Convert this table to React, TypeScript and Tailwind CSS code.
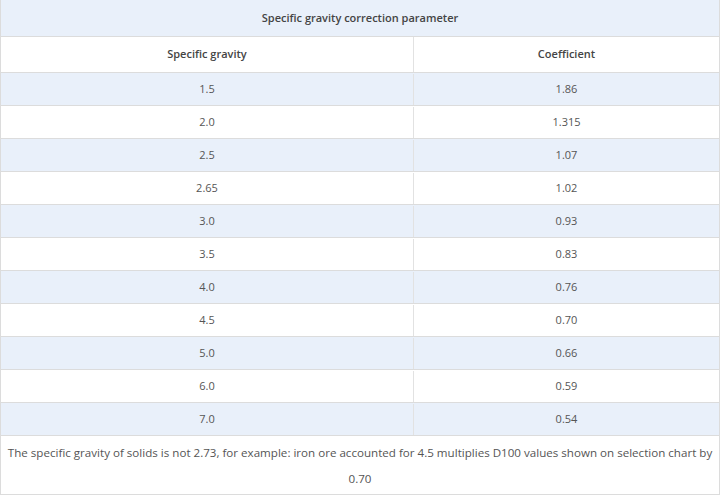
import React from "react";

const rows: [string, string][] = [
  ["1.5", "1.86"],
  ["2.0", "1.315"],
  ["2.5", "1.07"],
  ["2.65", "1.02"],
  ["3.0", "0.93"],
  ["3.5", "0.83"],
  ["4.0", "0.76"],
  ["4.5", "0.70"],
  ["5.0", "0.66"],
  ["6.0", "0.59"],
  ["7.0", "0.54"],
];

export default function App() {
  return (
    <div className="w-[721px] h-[497px] bg-white text-[11px] text-[#555] font-['Open_Sans',sans-serif]">
      <div className="w-[720px] border-l border-r border-b border-[#dcdcdc]">
        <div className="h-[37px] bg-[#e9f0fa] border-b border-[#dcdcdc] flex items-center justify-center font-semibold text-[#444]">
          Specific gravity correction parameter
        </div>
        <div className="grid grid-cols-[413px_1fr] h-[36px] border-b border-[#dcdcdc] font-semibold text-[#444]">
          <div className="flex items-center justify-center border-r border-[#e2e2e2]">Specific gravity</div>
          <div className="flex items-center justify-center">Coefficient</div>
        </div>
        {rows.map(([a, b], i) => (
          <div
            key={a}
            className={
              "grid grid-cols-[413px_1fr] h-[33px] border-b border-[#dcdcdc] pt-px " +
              (i % 2 === 0 ? "bg-[#e9f0fa]" : "bg-white")
            }
          >
            <div className="flex items-center justify-center border-r border-[#e2e2e2]">{a}</div>
            <div className="flex items-center justify-center">{b}</div>
          </div>
        ))}
        <div className="h-[58px] px-[1px] text-center leading-[26px] pt-[4px] text-[11.6px]">
          The specific gravity of solids is not 2.73, for example: iron ore accounted for 4.5 multiplies D100 values shown on selection chart by 0.70
        </div>
      </div>
    </div>
  );
}
